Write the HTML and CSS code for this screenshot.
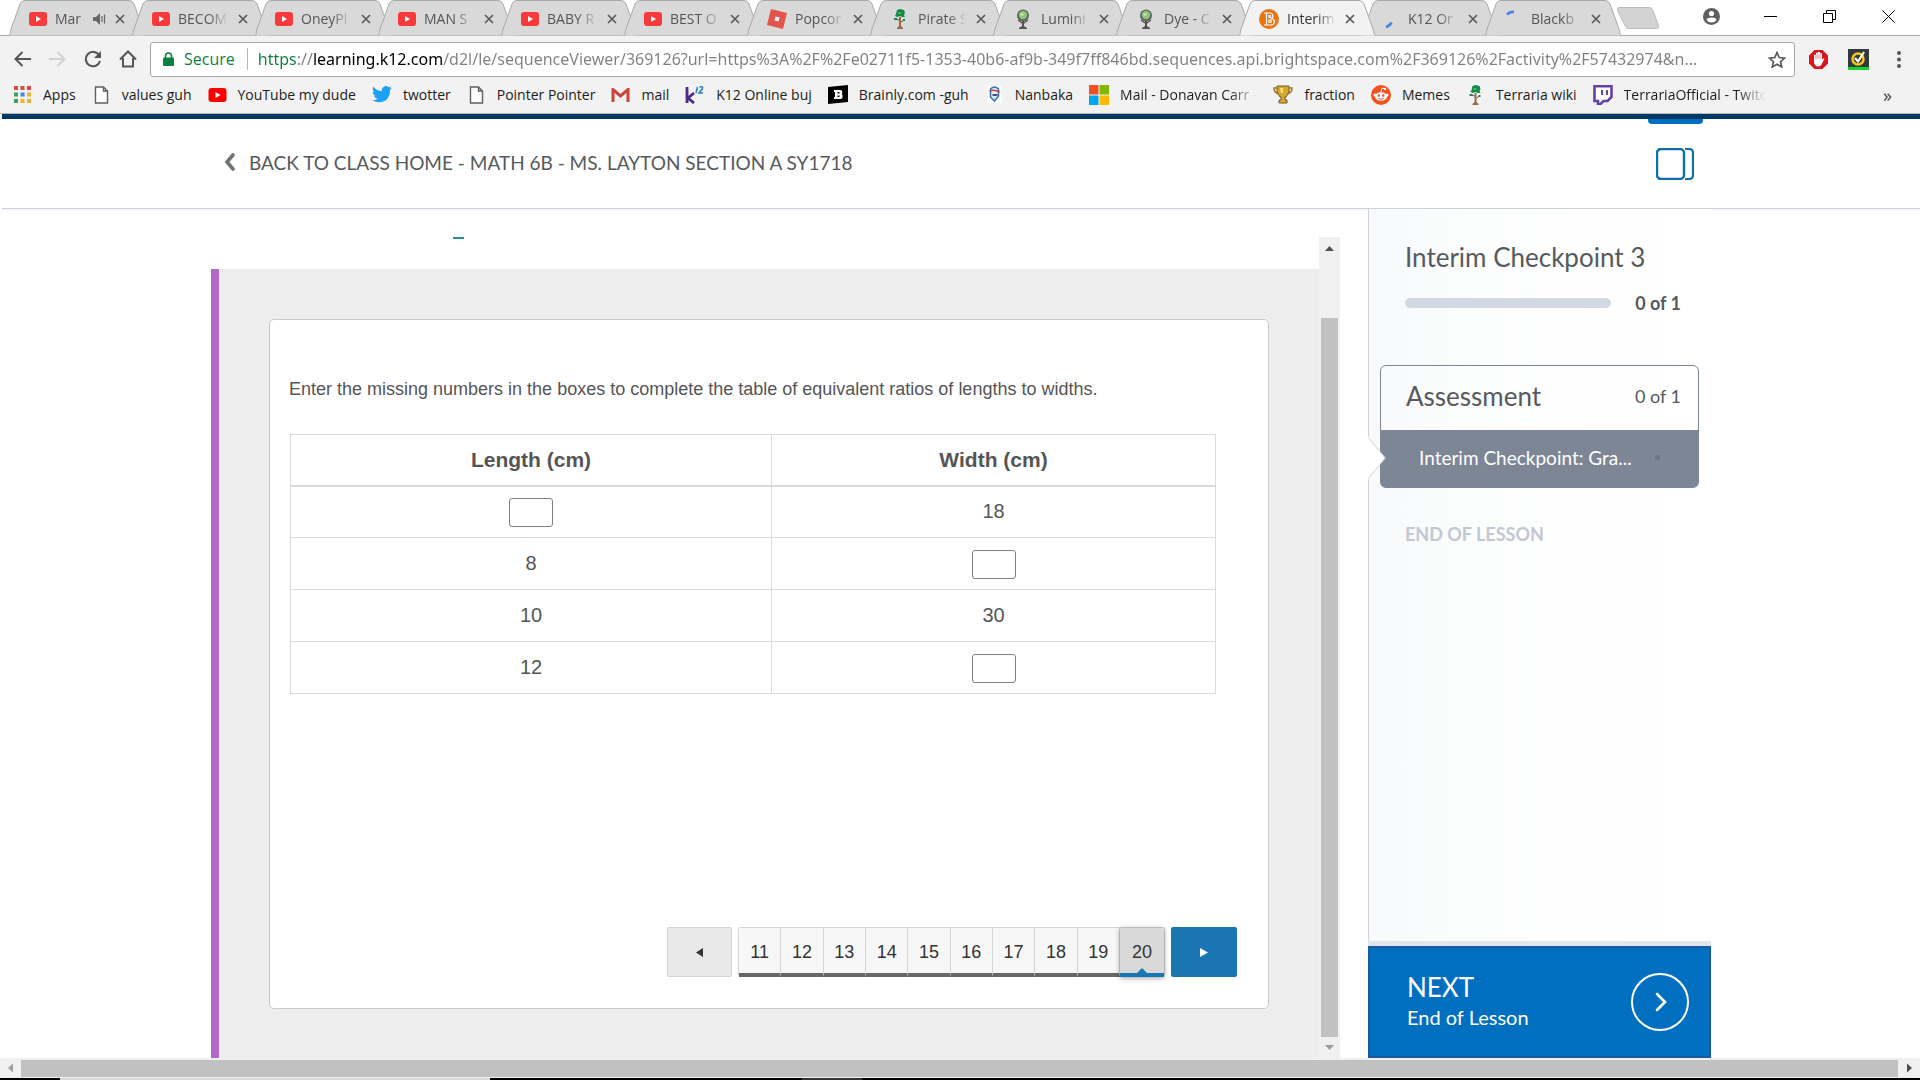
FILE: index.html
```html
<!DOCTYPE html>
<html lang="en">
<head>
  <meta charset="UTF-8" />
  <meta name="viewport" content="width=device-width, initial-scale=1" />
  <title>Interim Checkpoint 3</title>
  <link rel="stylesheet" href="styles.css">
</head>
<body>

  <!-- Shared icons -->
  <svg class="defs" width="0" height="0">
    <symbol id="tabShape" viewBox="0 0 138 36"><path d="M0 35.500 C3 35.500 2 32 3 29 L12 4 Q13.500 .5 17 .5 H121 Q124.500 .5 126 4 L135 29 C136 32 136 35.500 138 35.500" stroke="#a9a9a9"/></symbol>
    <symbol id="yt" viewBox="0 0 18 14"><rect width="18" height="14" rx="3" fill="currentColor"/><path d="M7 4v6l5-3z" fill="#fff"/></symbol>
    <symbol id="x" viewBox="0 0 10 10"><path d="M1 1l8 8M9 1l-8 8" stroke="#5a5a5a" stroke-width="1.700"/></symbol>
    <symbol id="tree" viewBox="0 0 14 20"><path d="M6 8h2v9l2 2v1H4v-1l2-2z" fill="#97694f"/><path d="M4 1l3-1 4 1 1 3-1 2 1 2H9L7 7 4 8 2 7l1-2z" fill="#168a45"/><path d="M5 3h3v2H5z" fill="#35b865"/><path d="M6 11l-3-1M8 13l3-2" stroke="#6c4634"/><path d="M1 9h3v2H1zM10 10h2v2h-2z" fill="#168a45"/></symbol>
    <symbol id="orb" viewBox="0 0 14 20"><circle cx="7" cy="6.500" r="6" fill="#58685f"/><circle cx="7" cy="6" r="4.200" fill="#92c47b"/><path d="M4.500 4.500h3v2h-3z" fill="#d4ecb4"/><path d="M6 12h2v5l3 2v1H3v-1l3-2z" fill="#59504f"/><path d="M2 11l4 3M12 11l-4 3" stroke="#59504f" stroke-width="1.300"/></symbol>
    <symbol id="page" viewBox="0 0 14 18"><path d="M1 1h8l4 4v12H1zM9 1v4h4" fill="#fff" stroke="#5f5f5f" stroke-width="1.400"/></symbol>
  </svg>

  <!-- Tab strip -->
  <div class="tabstrip">
    <div class="tab"><svg class="shape"><use href="#tabShape"/></svg><svg class="fav red" width="18" height="14"><use href="#yt"/></svg><span class="title">Mar</span><svg class="sound" width="13" height="12" viewBox="0 0 13 12"><path d="M0 4h3l4-4v12l-4-4H0z" fill="#666"/><path d="M9 3v6M11.500 1.500v9" stroke="#666" stroke-width="1.200"/></svg><button class="close" aria-label="Close tab"><svg><use href="#x"/></svg></button></div>
    <div class="tab"><svg class="shape"><use href="#tabShape"/></svg><svg class="fav red" width="18" height="14"><use href="#yt"/></svg><span class="title">BECOM</span><button class="close" aria-label="Close tab"><svg><use href="#x"/></svg></button></div>
    <div class="tab"><svg class="shape"><use href="#tabShape"/></svg><svg class="fav red" width="18" height="14"><use href="#yt"/></svg><span class="title">OneyPl</span><button class="close" aria-label="Close tab"><svg><use href="#x"/></svg></button></div>
    <div class="tab"><svg class="shape"><use href="#tabShape"/></svg><svg class="fav red" width="18" height="14"><use href="#yt"/></svg><span class="title">MAN S</span><button class="close" aria-label="Close tab"><svg><use href="#x"/></svg></button></div>
    <div class="tab"><svg class="shape"><use href="#tabShape"/></svg><svg class="fav red" width="18" height="14"><use href="#yt"/></svg><span class="title">BABY R</span><button class="close" aria-label="Close tab"><svg><use href="#x"/></svg></button></div>
    <div class="tab"><svg class="shape"><use href="#tabShape"/></svg><svg class="fav red" width="18" height="14"><use href="#yt"/></svg><span class="title">BEST O</span><button class="close" aria-label="Close tab"><svg><use href="#x"/></svg></button></div>
    <div class="tab"><svg class="shape"><use href="#tabShape"/></svg><svg class="fav" width="20" height="20" viewBox="0 0 20 20"><path d="M4 0l16 4-4 16-16-4z" fill="#e5544c"/><path d="M8.500 7.500l4 1-1 4-4-1z" fill="#fff"/></svg><span class="title">Popcor</span><button class="close" aria-label="Close tab"><svg><use href="#x"/></svg></button></div>
    <div class="tab"><svg class="shape"><use href="#tabShape"/></svg><svg class="fav" width="20" height="20"><use href="#tree"/></svg><span class="title">Pirate S</span><button class="close" aria-label="Close tab"><svg><use href="#x"/></svg></button></div>
    <div class="tab"><svg class="shape"><use href="#tabShape"/></svg><svg class="fav" width="20" height="20"><use href="#orb"/></svg><span class="title">Lumini</span><button class="close" aria-label="Close tab"><svg><use href="#x"/></svg></button></div>
    <div class="tab"><svg class="shape"><use href="#tabShape"/></svg><svg class="fav" width="20" height="20"><use href="#orb"/></svg><span class="title">Dye - C</span><button class="close" aria-label="Close tab"><svg><use href="#x"/></svg></button></div>
    <div class="tab active"><svg class="shape"><use href="#tabShape"/></svg><svg class="fav" width="20" height="20" viewBox="0 0 20 20"><circle cx="10" cy="10" r="10" fill="#e87511"/><path d="M5 4h6.500a3 3 0 0 1 1 5.500a3.200 3.200 0 0 1-1 6.500H5M7.500 4v12M10 6.500h1.500v2H10zM10 11h2v2.500h-2z" fill="none" stroke="#fff" stroke-width="1.200"/></svg><span class="title">Interim</span><button class="close" aria-label="Close tab"><svg><use href="#x"/></svg></button></div>
    <div class="tab"><svg class="shape"><use href="#tabShape"/></svg><svg class="fav" width="18" height="18" viewBox="0 0 18 18"><path d="M4 17q4-1 5.500-4.500" fill="none" stroke="#4a82e4" stroke-width="2.800"/></svg><span class="title">K12 Or</span><button class="close" aria-label="Close tab"><svg><use href="#x"/></svg></button></div>
    <div class="tab"><svg class="shape"><use href="#tabShape"/></svg><svg class="fav" width="18" height="18" viewBox="0 0 18 18"><path d="M2 4.500q3-3 7-2.500" fill="none" stroke="#4a82e4" stroke-width="2.800"/></svg><span class="title">Blackb</span><button class="close" aria-label="Close tab"><svg><use href="#x"/></svg></button></div>
    <button class="new-tab" aria-label="New tab"><svg width="44" height="22" viewBox="0 0 44 22"><path d="M3 .5h30q3 0 4 3l5.500 15q1 3-2 3H13q-3 0-4-3L1.500 3.500Q1 .5 3 .5z" fill="#d3d3d3" stroke="#bcbcbc"/></svg></button>
    <div class="window-buttons">
      <button aria-label="Profile"><svg width="17" height="17" viewBox="0 0 17 17"><circle cx="8.500" cy="8.500" r="8.500" fill="#5f5f5f"/><circle cx="8.500" cy="5.500" r="2.600" fill="#fff"/><path d="M3.500 12q0-2.500 5-2.500t5 2.500q-2 2.500-5 2.500t-5-2.500z" fill="#fff"/></svg></button>
      <button aria-label="Minimize"><svg width="13" height="13" viewBox="0 0 13 13"><path d="M0 6.500h13" stroke="#000"/></svg></button>
      <button aria-label="Restore"><svg width="13" height="13" viewBox="0 0 13 13"><path d="M.5 3.500h9v9h-9zM3.500 3.500v-3h9v9h-3" fill="none" stroke="#000"/></svg></button>
      <button aria-label="Close"><svg width="13" height="13" viewBox="0 0 13 13"><path d="M.5.5l12 12M12.500.5l-12 12" stroke="#000"/></svg></button>
    </div>
  </div>

  <!-- Address bar -->
  <div class="toolbar">
    <div class="nav">
      <button aria-label="Back"><svg width="17" height="16" viewBox="0 0 17 16"><path d="M17 8H2M8.500 1l-7 7 7 7" fill="none" stroke="#555" stroke-width="2"/></svg></button>
      <button aria-label="Forward"><svg width="17" height="16" viewBox="0 0 17 16"><path d="M0 8h15M8.500 1l7 7-7 7" fill="none" stroke="#d2d2d2" stroke-width="2"/></svg></button>
      <button aria-label="Reload"><svg width="18" height="18" viewBox="0 0 18 18"><path d="M15 5A7.200 7.200 0 1 0 16 11" fill="none" stroke="#555" stroke-width="2"/><path d="M17 1v7h-7z" fill="#555"/></svg></button>
      <button aria-label="Home"><svg width="18" height="18" viewBox="0 0 18 18"><path d="M1 9.500L9 1.500l8 8M4 8v8.500h10V8" fill="none" stroke="#555" stroke-width="2"/></svg></button>
    </div>
    <div class="omnibox">
      <svg width="11" height="14" viewBox="0 0 11 14"><path d="M2.500 6V4a3 3 0 0 1 6 0v2" fill="none" stroke="#0b8043" stroke-width="1.600"/><rect y="5.500" width="11" height="8.500" rx="1" fill="#0b8043"/></svg>
      <label class="secure" for="url">Secure</label>
      <input id="url" class="url" type="text" value="https://learning.k12.com/d2l/le/sequenceViewer/369126?url=https%3A%2F%2Fe02711f5-1353-40b6-af9b-349f7ff846bd.sequences.api.brightspace.com%2F369126%2Factivity%2F57432974&amp;n..." />
      <button aria-label="Bookmark this page"><svg width="18" height="17" viewBox="0 0 18 17"><path d="M9 1.500l2.200 5.100 5.500.5-4.200 3.600 1.300 5.400L9 13.200l-4.800 2.900 1.300-5.400L1.300 7.100l5.500-.5z" fill="none" stroke="#555" stroke-width="1.600"/></svg></button>
    </div>
    <div class="extensions">
      <button aria-label="Ad blocker"><svg width="19" height="19" viewBox="0 0 19 19"><path d="M5.500 0h8L19 5.500v8L13.500 19h-8L0 13.500v-8z" fill="#d8141c"/><path d="M5 9V5.500q0-1 1-1t1 1V3.500q0-1 1-1t1 1V2.800q0-1 1-1t1 1v1.200q0-1 1-1t1 1V10l1-1.500q1-.8 1.500.2L13 13.500q-1 3-4 3t-4-4z" fill="#fff"/><path d="M7 5v4M9 4v5M11 4v5" stroke="#d8141c" stroke-width=".5"/></svg></button>
      <button aria-label="Norton"><svg width="21" height="21" viewBox="0 0 21 21"><rect width="21" height="21" fill="#333a3d"/><rect y="18" width="21" height="3" fill="#15d52a"/><circle cx="10" cy="10" r="5.500" fill="none" stroke="#f7c61a" stroke-width="2.500"/><path d="M7 9l3 3.500L16 3" fill="none" stroke="#fff" stroke-width="2.200"/></svg></button>
      <button aria-label="Menu"><svg width="4" height="17" viewBox="0 0 4 17"><g fill="#555"><circle cx="2" cy="2" r="2"/><circle cx="2" cy="8.500" r="2"/><circle cx="2" cy="15" r="2"/></g></svg></button>
    </div>
  </div>

  <!-- Bookmarks -->
  <nav class="bookmarks">
    <a href="#"><svg width="17" height="17" viewBox="0 0 17 17"><path d="M0 0h4v4H0zM6.500 0h4v4h-4zM13 0h4v4h-4z" fill="#dc4a3d"/><path d="M0 6.500h4v4H0zM0 13h4v4H0z" fill="#3f9e59"/><path d="M6.500 6.500h4v4h-4z" fill="#4285f4"/><path d="M13 6.500h4v4h-4zM6.500 13h4v4h-4zM13 13h4v4h-4z" fill="#f0b429"/></svg>Apps</a>
    <a href="#"><svg width="14" height="18"><use href="#page"/></svg>values guh</a>
    <a href="#"><svg class="pure-red" width="19" height="14"><use href="#yt"/></svg>YouTube my dude</a>
    <a href="#"><svg width="20" height="17" viewBox="0 0 20 17"><path d="M20 2l-2 2q.3 7-4.500 10.500T0 14.500q3.500 0 5.800-1.800-3-.3-3.800-2.900h1.800Q.8 8.800.7 5.700l1.800.5Q-.2 4 1.300.8 4.800 5 9.800 5.200 9.300 1.500 12.200.4q2.500-.9 4.500.9L19.300.3 17.600 2.500z" fill="#1da1f2"/></svg>twotter</a>
    <a href="#"><svg width="14" height="18"><use href="#page"/></svg>Pointer Pointer</a>
    <a href="#"><svg width="18" height="14" viewBox="0 0 18 14"><path d="M1.500 14V1.500L9 8l7.500-6.500V14" fill="#eee" stroke="#c9443a" stroke-width="3"/></svg>mail</a>
    <a href="#"><svg width="20" height="19" viewBox="0 0 20 19"><path d="M2 2v16M9 8l-6 5 6 5" fill="none" stroke="#4d2a86" stroke-width="2.800"/><path d="M12.500 2l-1.500 6M14.500 2q4-1 3 1.500L14 8h4" fill="none" stroke="#2a83b8" stroke-width="1.600"/></svg>K12 Online buj</a>
    <a href="#"><svg width="20" height="19" viewBox="0 0 20 19"><path d="M0 2l20-2v17L0 19z" fill="#000"/><path d="M6 5h6q3 0 2 4 2 5-2 5H6v-2h1V7H6z" fill="#fff"/><path d="M9.500 7h2v1.500h-2zM9.500 10.500h2V12h-2z" fill="#000"/></svg>Brainly.com -guh</a>
    <a href="#"><svg width="14" height="17" viewBox="0 0 14 17"><rect width="14" height="17" fill="#fff"/><path d="M3 3q4-4 8 0v7l-4 5-4-4z" fill="#e4eef8" stroke="#3276b5" stroke-width="1.600"/><path d="M2 5q5-2 10 1" stroke="#c93a43" stroke-width="1.600" fill="none"/><path d="M5 9h5" stroke="#17212e" stroke-width="1.500"/></svg>Nanbaka</a>
    <a href="#"><svg width="20" height="20" viewBox="0 0 20 20"><path d="M0 0h9.500v9.500H0z" fill="#f25022"/><path d="M10.500 0H20v9.500h-9.500z" fill="#7fba00"/><path d="M0 10.500h9.500V20H0z" fill="#00a4ef"/><path d="M10.500 10.500H20V20h-9.500z" fill="#ffb900"/></svg><span class="fade">Mail - Donavan Carr -</span></a>
    <a href="#"><svg width="20" height="19" viewBox="0 0 20 19"><path d="M4 1h12v6l-3 5h-1v3h2v3H6v-3h2v-3H7L4 7z" fill="#d6a72a" stroke="#705a24"/><path d="M4 3H1q0 5 5 6M16 3h3q0 5-5 6" fill="none" stroke="#9a7b2b" stroke-width="1.500"/><path d="M7 3h3v5H8z" fill="#fae17c"/></svg>fraction</a>
    <a href="#"><svg width="20" height="20" viewBox="0 0 20 20"><circle cx="10" cy="10" r="10" fill="#f4511e"/><ellipse cx="10" cy="11.500" rx="6" ry="4.300" fill="#fff"/><circle cx="4" cy="10" r="1.500" fill="#fff"/><circle cx="16" cy="10" r="1.500" fill="#fff"/><path d="M10 7l1-4 3 1" fill="none" stroke="#fff"/><circle cx="14" cy="4" r="1.200" fill="#fff"/><circle cx="7.800" cy="10.500" r="1.200" fill="#f4511e"/><circle cx="12.200" cy="10.500" r="1.200" fill="#f4511e"/><path d="M7.500 13.500q2.500 1.500 5 0" fill="none" stroke="#f4511e"/></svg>Memes</a>
    <a href="#"><svg width="14" height="20"><use href="#tree"/></svg>Terraria wiki</a>
    <a href="#"><svg width="20" height="20" viewBox="0 0 20 20"><path d="M1.500 1.300h17V12l-4 4h-4L7.500 19H5v-3H1.500z" fill="#fff" stroke="#6441a4" stroke-width="2.600"/><path d="M9 5v5M14 5v5" stroke="#6441a4" stroke-width="2"/></svg><span class="fade">TerrariaOfficial - Twitc</span></a>
    <button class="more" aria-label="More bookmarks">»</button>
  </nav>

  <!-- Page -->
  <div class="page">
    <header class="site-header">
      <div class="wrap">
        <a class="back" href="#"><svg width="11" height="18" viewBox="0 0 11 18"><path d="M9 2L3 9l6 7" fill="none" stroke="#6e7376" stroke-width="3.600" stroke-linecap="round"/></svg>BACK TO CLASS HOME - MATH 6B - MS. LAYTON SECTION A SY1718</a>
        <button class="panel-toggle" aria-label="Toggle side panel"><svg width="38" height="32" viewBox="0 0 38 32"><rect x="1" y="1" width="27" height="30" rx="4" fill="none" stroke="#0f6fad" stroke-width="2.400"/><path d="M29 1h4q4 0 4 4v22q0 4-4 4h-4" fill="none" stroke="#0f6fad" stroke-width="2.200"/></svg></button>
      </div>
    </header>

    <div class="wrap body-row">
      <main class="viewer">
        <div class="viewer-main">
          <div class="viewer-top"><span class="dash"></span></div>
          <div class="activity">
            <section class="card">
              <p class="question">Enter the missing numbers in the boxes to complete the table of equivalent ratios of lengths to widths.</p>
              <table class="ratios">
                <thead>
                  <tr><th class="col-length">Length (cm)</th><th>Width (cm)</th></tr>
                </thead>
                <tbody>
                  <tr><td><input type="text" aria-label="Length for width 18"></td><td>18</td></tr>
                  <tr><td>8</td><td><input type="text" aria-label="Width for length 8"></td></tr>
                  <tr><td>10</td><td>30</td></tr>
                  <tr><td>12</td><td><input type="text" aria-label="Width for length 12"></td></tr>
                </tbody>
              </table>
              <div class="pager">
                <button class="prev" aria-label="Previous"><svg width="7" height="9" viewBox="0 0 7 9"><path d="M7 0v9L0 4.500z" fill="#333"/></svg></button>
                <div class="pages">
                  <button>11</button><button>12</button><button>13</button><button>14</button><button>15</button><button>16</button><button>17</button><button>18</button><button>19</button><button class="current">20</button>
                </div>
                <button class="next" aria-label="Next"><svg width="8" height="9" viewBox="0 0 8 9"><path d="M0 0v9l8-4.500z" fill="#fff"/></svg></button>
              </div>
            </section>
          </div>
        </div>
        <div class="vscroll">
          <svg width="21" height="21" viewBox="0 0 21 21"><path d="M6 14h9l-4.500-5z" fill="#4d4d4d"/></svg>
          <div class="thumb"></div>
          <svg width="21" height="21" viewBox="0 0 21 21"><path d="M6 8h9l-4.500 5z" fill="#9c9c9c"/></svg>
        </div>
      </main>

      <aside class="sidebar">
        <h1>Interim Checkpoint 3</h1>
        <div class="progress"><div class="bar"></div><span>0 of 1</span></div>
        <div class="module">
          <svg class="notch" width="20" height="42" viewBox="0 0 20 42"><path d="M0 0h2v2l16 19L2 40v2H0z" fill="#fff"/><path d="M1.500 1l17 20-17 20" fill="none" stroke="#cdd2d8"/></svg>
          <div class="module-head"><h2>Assessment</h2><span>0 of 1</span></div>
          <a class="topic" href="#"><span>Interim Checkpoint: Gra...</span><i class="dot"></i></a>
        </div>
        <p class="end">END OF LESSON</p>
        <button class="next-lesson">
          <span class="next-text"><span class="big">NEXT</span><span>End of Lesson</span></span>
          <svg width="58" height="58" viewBox="0 0 58 58"><circle cx="29" cy="29" r="28" fill="none" stroke="#fff" stroke-width="2"/><path d="M26 21l8 8-8 8" fill="none" stroke="#fff" stroke-width="2.600" stroke-linecap="round"/></svg>
        </button>
      </aside>
    </div>
  </div>

  <div class="hscroll">
    <svg width="21" height="20" viewBox="0 0 21 20"><path d="M13 5.500v9L8 10z" fill="#a0a0a0"/></svg>
    <div class="thumb"></div>
    <svg width="22" height="20" viewBox="0 0 22 20"><path d="M9 5.500v9l5-4.500z" fill="#4d4d4d"/></svg>
  </div>
  <div class="taskbar"></div>

</body>
</html>
```
FILE: styles.css
```css
* { box-sizing: border-box; margin: 0; padding: 0; }
body {
  display: flex;
  flex-direction: column;
  height: 100vh;
  overflow: hidden;
  background: #fff;
  font-family: 'Open Sans', sans-serif;
}
button { border: none; background: none; font: inherit; color: inherit; cursor: pointer; }
a { color: inherit; text-decoration: none; }
svg { flex: none; display: block; }
.defs { position: absolute; }

/* Tab strip */
.tabstrip {
  display: flex;
  height: 36px;
  padding-left: 8px;
  border-bottom: 1px solid #a9a9a9;
}
.tab {
  position: relative;
  display: flex;
  align-items: center;
  width: 138px;
  height: 36px;
  margin-right: -15px;
  padding: 1px 21px 0 21px;
  font-size: 14px;
  color: #555;
}
.shape {
  position: absolute;
  top: 0; left: 0;
  width: 138px; height: 36px;
  fill: #d9d9d9;
}
.tab.active { z-index: 2; color: #333; }
.tab.active .shape { fill: #f2f2f2; }
.fav, .title, .sound, .close { position: relative; }
.red { color: #f93a3a; }
.pure-red { color: #f00; }
.title {
  flex: 1;
  min-width: 0;
  margin-left: 8px;
  white-space: nowrap;
  mask-image: linear-gradient(to right, #000 60%, transparent);
}
.close { width: 10px; height: 10px; margin-left: 9px; }
.close svg { width: 10px; height: 10px; }
.new-tab { margin-left: 9px; }
.window-buttons {
  display: flex;
  align-items: center;
  margin: 0 2px 0 auto;
  padding-bottom: 2px;
}
.window-buttons button {
  display: flex;
  justify-content: center;
  width: 59px;
}

/* Toolbar */
.toolbar {
  display: flex;
  align-items: center;
  height: 46px;
  padding: 0 18px 0 5px;
  background: #f2f2f2;
}
.nav { display: flex; width: 145px; }
.nav button {
  display: flex;
  align-items: center;
  justify-content: center;
  width: 35px;
  height: 30px;
}
.omnibox {
  flex: 1;
  display: flex;
  align-items: center;
  height: 35px;
  padding: 0 8px 0 12px;
  background: #fff;
  border: 1px solid #a6a6a6;
  border-radius: 3px;
}
.secure {
  margin: 0 10px;
  padding-right: 12px;
  border-right: 1px solid #b5b5b5;
  font-size: 16px;
  color: #0b8043;
}
.url {
  flex: 1;
  min-width: 0;
  border: none;
  outline: none;
  font: 16px 'Noto Sans', sans-serif;
  background: linear-gradient(to right, #0b8043 39px, #808080 39px 55px, #000 55px 185px, #808080 185px);
  background-clip: text;
  -webkit-text-fill-color: transparent;
}
.extensions {
  display: flex;
  align-items: center;
  gap: 20px;
  padding-left: 14px;
}
.extensions button:last-child { margin: 0 1px 0 8px; }

/* Bookmarks */
.bookmarks {
  display: flex;
  align-items: center;
  gap: 16px;
  height: 32px;
  padding: 0 28px 6px 13px;
  background: #f2f2f2;
  border-bottom: 1px solid #b6b4b4;
  font-size: 14px;
  color: #1c1c1c;
  white-space: nowrap;
}
.bookmarks a {
  display: flex;
  align-items: center;
  gap: 11px;
}
.bookmarks svg { min-width: 19px; }
.fade { mask-image: linear-gradient(to right, #000 80%, transparent); }
.more { margin-left: auto; font-size: 18px; color: #444; }

/* Page */
.page {
  flex: 1;
  display: flex;
  flex-direction: column;
  min-height: 0;
  padding-left: 2px;
  font-family: Lato, sans-serif;
  color: #565a5c;
}
.wrap {
  display: flex;
  width: 100%;
  max-width: 1500px;
  margin: 0 auto;
}
.site-header {
  flex: none;
  border-top: 5px solid #003865;
  border-bottom: 1px solid #cdd2d8;
  box-shadow: 0 2px 0 #f4f6f9;
}
.site-header .wrap {
  height: 89px;
  align-items: center;
  justify-content: space-between;
}
.back {
  display: flex;
  align-items: center;
  gap: 14px;
  padding: 0 0 3px 13px;
  font-size: 19px;
}
.panel-toggle {
  align-self: flex-start;
  width: 55px;
  margin-right: 8px;
}
.panel-toggle::before {
  content: '';
  display: block;
  height: 5px;
  background: #006fbf;
  border-radius: 0 0 4px 4px;
}
.panel-toggle svg { margin: 24px 0 0 8px; }
.body-row { flex: 1; min-height: 0; }
.viewer {
  flex: 1;
  display: flex;
  min-width: 0;
  padding: 28px 28px 0 0;
}
.viewer-main { flex: 1; display: flex; flex-direction: column; }
.viewer-top { height: 32px; padding-left: 242px; }
.dash {
  display: block;
  width: 11px;
  height: 2px;
  background: #2c8a9c;
}
.activity {
  flex: 1;
  display: flex;
  padding: 50px 50px 49px;
  background: #ededed;
  border-left: 8px solid #b369c9;
}
.card {
  flex: 1;
  display: flex;
  flex-direction: column;
  padding: 56px 31px 31px 19px;
  background: #fff;
  border: 1px solid #c9c9c9;
  border-radius: 5px;
  font-family: 'Liberation Sans', sans-serif;
  color: #555;
}
.question { font-size: 18px; line-height: 26px; }
.ratios {
  width: calc(100% - 22px);
  margin: 32px 0 0 1px;
  border-collapse: collapse;
  font-size: 20px;
  text-align: center;
}
.ratios th, .ratios td { height: 52px; border: 1px solid #dadada; vertical-align: middle; }
.ratios th { height: 51px; border-bottom-width: 2px; font-size: 21px; }
.col-length { width: 52%; }
.ratios input {
  display: block;
  width: 44px;
  height: 29px;
  margin: 2px auto 0;
  border: 1px solid #808080;
  border-radius: 3px;
}
.pager {
  display: flex;
  gap: 6px;
  height: 50px;
  margin-top: auto;
  margin-left: auto;
  font-size: 18px;
  color: #333;
}
.prev, .next {
  display: flex;
  align-items: center;
  justify-content: center;
  width: 66px;
  border-radius: 2px;
}
.prev { width: 65px; background: #e9e9e9; border: 1px solid #d5d5d5; }
.next { background: #1a76b2; }
.pages {
  display: flex;
  width: 427px;
  border: 1px solid #d5d5d5;
  border-bottom: 0;
  border-radius: 3px;
}
.pages button {
  flex: 1;
  padding-top: 4px;
  background: #f7f7f7;
  border-right: 1px solid #d5d5d5;
  border-bottom: 4px solid #666;
}
.pages .current {
  position: relative;
  flex: none;
  width: 44px;
  background: #d9d9d9;
  border-right: 0;
  border-bottom-color: #1a76b2;
  box-shadow: 0 1px 5px rgba(0,0,0,0.4);
}
.current::after {
  content: '';
  position: absolute;
  bottom: 0; left: 17px;
  border: 5px solid transparent;
  border-top: 0;
  border-bottom-color: #1a76b2;
}
.vscroll {
  display: flex;
  flex-direction: column;
  width: 21px;
  background: #f0f0f0;
}
.vscroll .thumb { flex: 1; margin: 60px 2px 0; background: #c1c1c1; }

/* Sidebar */
.sidebar {
  display: flex;
  flex-direction: column;
  width: 343px;
  border-left: 1px solid #cdd2d8;
  background: linear-gradient(to right, #f7f9fb, #fcfdfd 30%, #fff 90%);
}
.sidebar h1 {
  padding: 32px 36px 0;
  font-size: 26px;
  font-weight: 400;
  line-height: 32px;
}
.progress {
  display: flex;
  align-items: center;
  gap: 24px;
  padding: 17px 30px 0 36px;
  font-size: 18px;
  font-weight: 700;
  line-height: 26px;
}
.progress .bar { flex: 1; height: 10px; border-radius: 5px; background: #d3d9e3; }
.module {
  position: relative;
  margin: 49px 12px 0 11px;
  border: 1px solid #7c8695;
  border-radius: 6px;
}
.module-head {
  display: flex;
  align-items: center;
  justify-content: space-between;
  height: 64px;
  padding: 0 17px 4px 25px;
  font-size: 18px;
}
.module-head h2 { font-size: 26px; font-weight: 400; }
.topic {
  display: flex;
  align-items: center;
  justify-content: space-between;
  height: 57px;
  padding: 0 38px 3px 38px;
  background: #7c8695;
  border-radius: 0 0 4px 4px;
  font-size: 19px;
  color: #fff;
}
.dot { width: 5px; height: 5px; background: #6f7886; }
.notch { position: absolute; top: 71px; left: -14px; z-index: 1; }
.end {
  padding: 32px 36px;
  font-size: 18px;
  font-weight: 700;
  line-height: 28px;
  color: #c0c8d4;
}
.next-lesson {
  display: flex;
  align-items: center;
  justify-content: space-between;
  height: 112px;
  margin: auto 0 0 -1px;
  padding: 0 20px 0 37px;
  background: #006fbf;
  border: 2px solid #1a5a9e;
  box-shadow: 0 -5px 0 #e1e6ec;
  color: #fff;
  text-align: left;
}
.next-text { display: flex; flex-direction: column; font-size: 20px; line-height: 30px; }
.next-text .big { font-size: 26px; }

/* Bottom edge */
.hscroll { display: flex; align-items: center; height: 20px; background: #f0f0f0; }
.hscroll .thumb { flex: 1; height: 17px; background: #c1c1c1; }
.taskbar {
  height: 2px;
  background: linear-gradient(to right, #000 60px, #d8d8d8 60px 490px, #000 490px 802px, #333 802px 862px, #000 862px);
}
```
